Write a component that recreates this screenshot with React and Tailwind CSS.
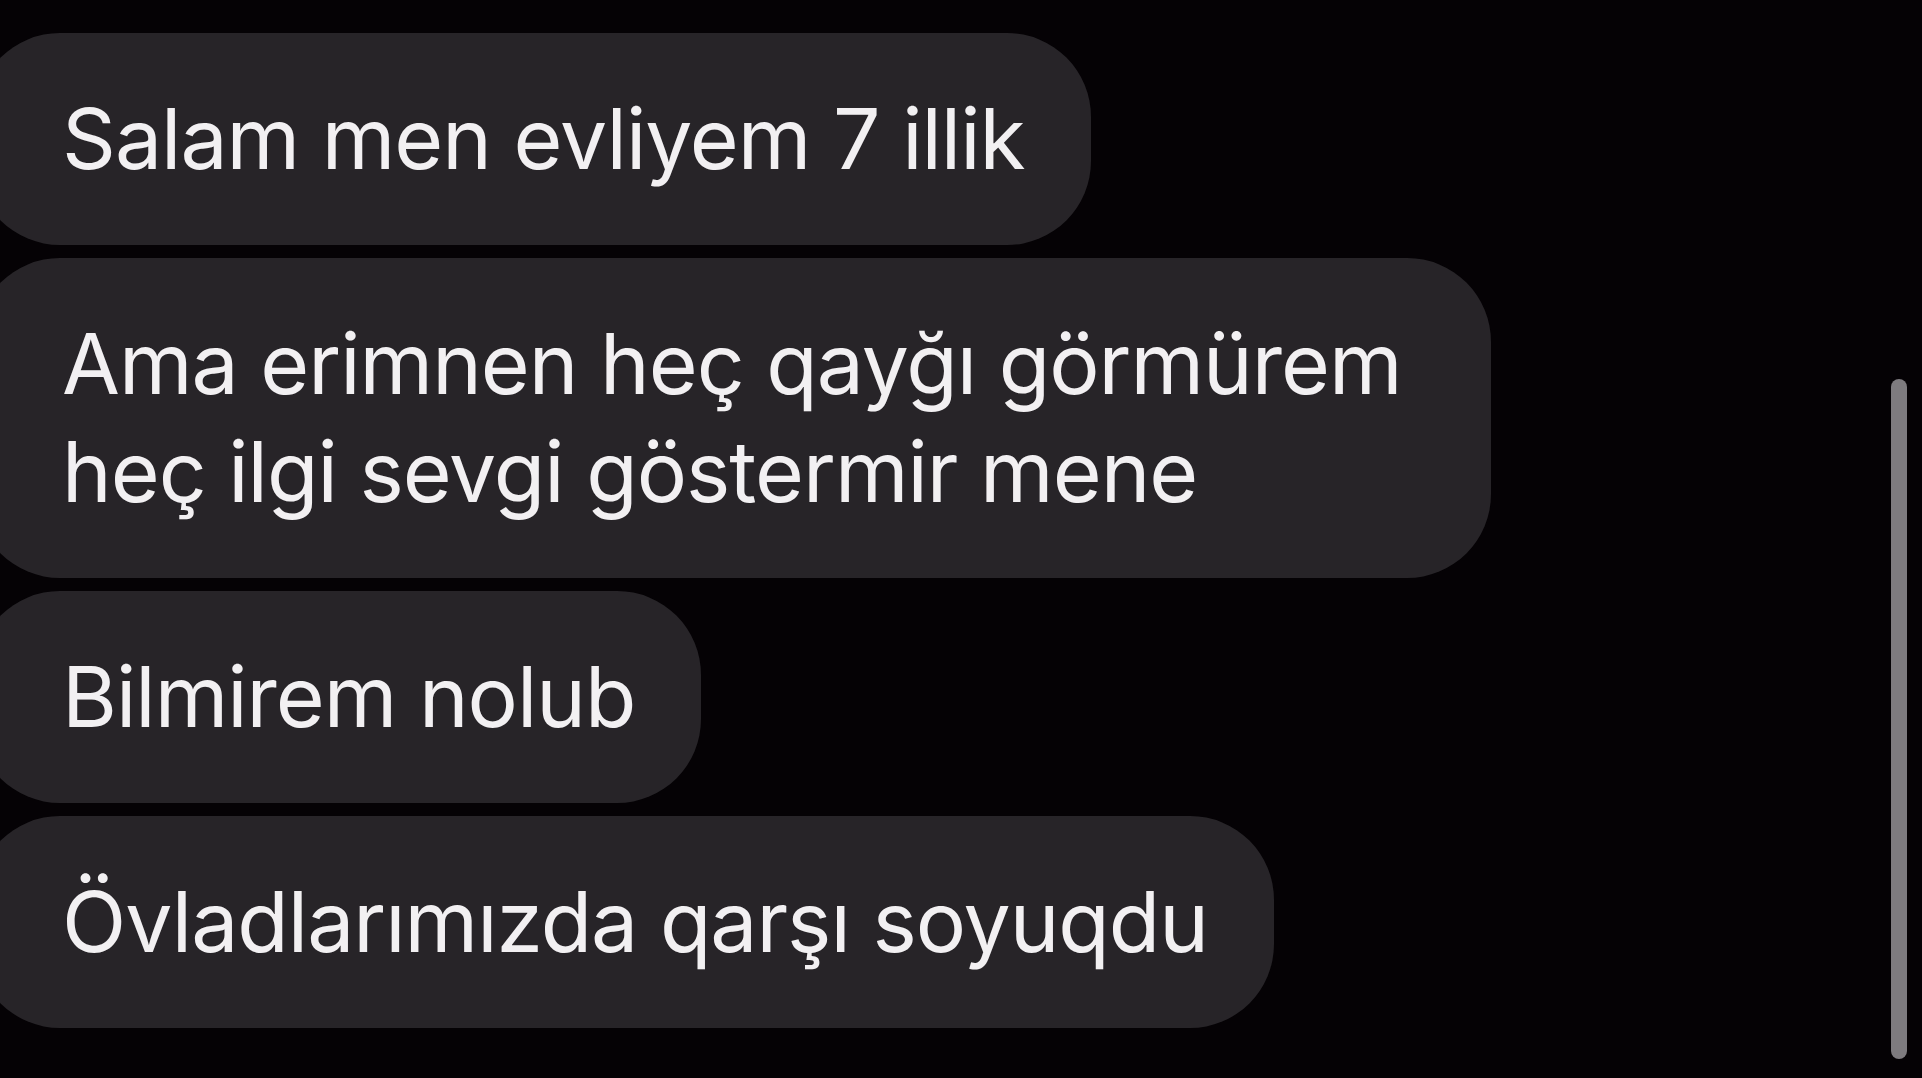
const messages = [
  { lines: ['Salam men evliyem 7 illik'], pr: 'pr-[66px]' },
  { lines: ['Ama erimnen heç qayğı görmürem', 'heç ilgi sevgi göstermir mene'], pr: 'pr-[89px]' },
  { lines: ['Bilmirem nolub'], pr: 'pr-[66px]' },
  { lines: ['Övladlarımızda qarşı soyuqdu'], pr: 'pr-[66px]' },
];

const Bubble = ({ lines, pr }) => (
  <div
    className={`self-start -ml-6 pl-[86px] ${pr} py-[52px] rounded-[84px] bg-[#272428] text-[#f2f0f2] text-[84px] leading-[108px] tracking-[-1px] whitespace-nowrap`}
  >
    {lines.map((line, i) => (
      <div key={i}>{line}</div>
    ))}
  </div>
);

export default function App() {
  return (
    <div className="relative w-[1922px] h-[1078px] overflow-hidden bg-[#050205] font-['Inter','Noto_Sans',sans-serif]">
      <div className="flex flex-col gap-[13px] pt-[33px]">
        {messages.map((m, i) => (
          <Bubble key={i} lines={m.lines} pr={m.pr} />
        ))}
      </div>

      {/* scroll indicator */}
      <div className="absolute left-[1891px] top-[379px] w-4 h-[680px] rounded-full bg-[#7e7b7f]" />
    </div>
  );
}
